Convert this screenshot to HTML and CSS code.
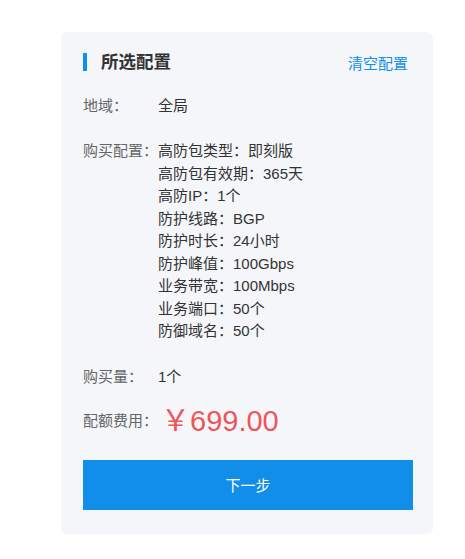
FILE: index.html
```html
<!DOCTYPE html>
<html lang="zh-CN">
<head>
<meta charset="utf-8">
<title>所选配置</title>
<link rel="stylesheet" href="styles.css">
</head>
<body>
<div class="page">
  <section class="card">
    <header class="card-head">
      <h2 class="title">所选配置</h2>
      <a class="clear" href="#">清空配置</a>
    </header>
    <div class="row">
      <div class="label">地域：</div>
      <div class="value">全局</div>
    </div>
    <div class="row row-config">
      <div class="label">购买配置：</div>
      <div class="value">
        <div>高防包类型：即刻版</div>
        <div>高防包有效期：365天</div>
        <div>高防IP：1个</div>
        <div>防护线路：BGP</div>
        <div>防护时长：24小时</div>
        <div>防护峰值：100Gbps</div>
        <div>业务带宽：100Mbps</div>
        <div>业务端口：50个</div>
        <div>防御域名：50个</div>
      </div>
    </div>
    <div class="row row-qty">
      <div class="label">购买量：</div>
      <div class="value">1个</div>
    </div>
    <div class="row row-price">
      <div class="label">配额费用：</div>
      <div class="price">￥699.00</div>
    </div>
    <button class="next" type="button">下一步</button>
  </section>
</div>
</body>
</html>
```

FILE: styles.css
```css
html, body {
  margin: 0;
  padding: 0;
  background: #ffffff;
}
body {
  font-family: "Liberation Sans", "Noto Sans CJK SC", sans-serif;
  font-size: 15px;
  color: #333333;
}
.page {
  padding: 32px 0 0 61px;
}
.card {
  width: 372px;
  box-sizing: border-box;
  background: #f5f6fa;
  border-radius: 6px;
  padding: 18px 20px 24px 22px;
}
.card-head {
  display: flex;
  align-items: center;
  justify-content: space-between;
  height: 24px;
}
.title {
  margin: 0;
  font-size: 17.5px;
  font-weight: bold;
  color: #333333;
  line-height: 24px;
  border-left: 4px solid #108ee9;
  padding-left: 14px;
  height: 18px;
  display: flex;
  align-items: center;
}
.clear {
  color: #108ee9;
  text-decoration: none;
  font-size: 15px;
  margin-right: 5px;
}
.row {
  display: flex;
  line-height: 22.5px;
  margin-top: 21px;
}
.row-config {
  margin-top: 22.5px;
}
.row-qty {
  margin-top: 23.5px;
}
.row-price {
  margin-top: 13px;
  align-items: center;
  height: 40px;
}
.label {
  width: 75px;
  flex: none;
  color: #666666;
}
.value {
  color: #333333;
}
.price {
  color: #ef5459;
  font-size: 29px;
  line-height: 40px;
  margin-left: 3px;
  margin-top: -2px;
}
.next {
  display: block;
  width: 330px;
  height: 50px;
  margin-top: 18px;
  border: none;
  background: #108ee9;
  color: #ffffff;
  font-family: "Liberation Sans", "Noto Sans CJK SC", sans-serif;
  font-size: 15px;
  cursor: pointer;
}
```
